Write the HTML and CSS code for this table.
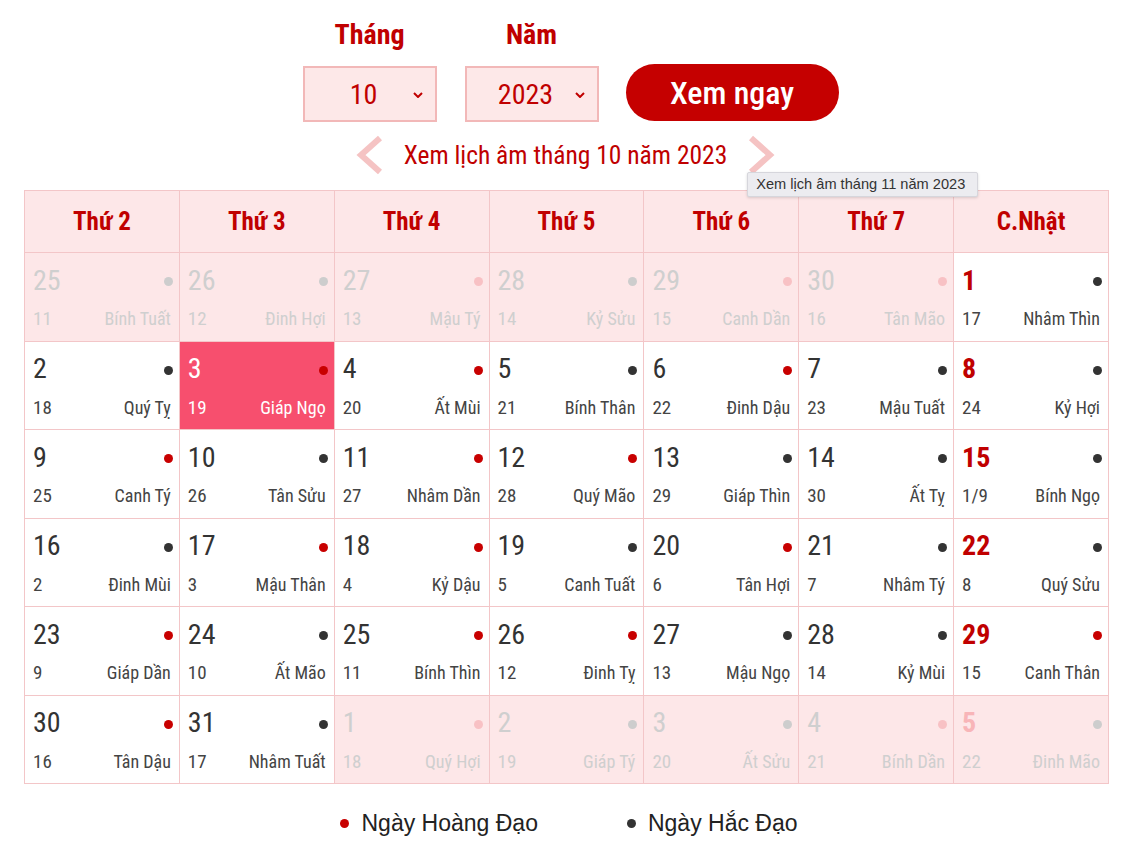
FILE: index.html
```html
<!DOCTYPE html>
<html lang="vi">
<head>
<meta charset="utf-8">
<title>Lịch âm tháng 10 năm 2023</title>
<link rel="stylesheet" href="styles.css">
</head>
<body>
<div class="page">
  <form class="picker">
    <div class="field">
      <div class="label">Tháng</div>
      <div class="select"><span>10</span><svg class="caret" viewBox="0 0 10 6" width="10" height="6"><path d="M1 1l4 4 4-4" fill="none" stroke="#c00000" stroke-width="2"/></svg></div>
    </div>
    <div class="field">
      <div class="label">Năm</div>
      <div class="select"><span>2023</span><svg class="caret" viewBox="0 0 10 6" width="10" height="6"><path d="M1 1l4 4 4-4" fill="none" stroke="#c00000" stroke-width="2"/></svg></div>
    </div>
    <button type="button" class="go">Xem ngay</button>
  </form>

  <div class="nav">
    <svg class="arrow" viewBox="0 0 30 40" width="30" height="40"><path d="M26 3L7 20l19 17" fill="none" stroke="#f5c3c3" stroke-width="6"/></svg>
    <div class="nav-title">Xem lịch âm tháng 10 năm 2023</div>
    <div class="next-wrap">
      <svg class="arrow" viewBox="0 0 30 40" width="30" height="40"><path d="M4 3l19 17L4 37" fill="none" stroke="#f5c3c3" stroke-width="6"/></svg>
      <div class="tooltip">Xem lịch âm tháng 11 năm 2023</div>
    </div>
  </div>

  <table class="cal">
    <thead>
      <tr><th>Thứ 2</th><th>Thứ 3</th><th>Thứ 4</th><th>Thứ 5</th><th>Thứ 6</th><th>Thứ 7</th><th>C.Nhật</th></tr>
    </thead>
    <tbody>
      <tr>
        <td class="out"><div class="top"><span class="d">25</span><i class="dot k"></i></div><div class="bot"><span>11</span><span>Bính Tuất</span></div></td>
        <td class="out"><div class="top"><span class="d">26</span><i class="dot k"></i></div><div class="bot"><span>12</span><span>Đinh Hợi</span></div></td>
        <td class="out"><div class="top"><span class="d">27</span><i class="dot r"></i></div><div class="bot"><span>13</span><span>Mậu Tý</span></div></td>
        <td class="out"><div class="top"><span class="d">28</span><i class="dot k"></i></div><div class="bot"><span>14</span><span>Kỷ Sửu</span></div></td>
        <td class="out"><div class="top"><span class="d">29</span><i class="dot r"></i></div><div class="bot"><span>15</span><span>Canh Dần</span></div></td>
        <td class="out"><div class="top"><span class="d">30</span><i class="dot r"></i></div><div class="bot"><span>16</span><span>Tân Mão</span></div></td>
        <td class="sun"><div class="top"><span class="d">1</span><i class="dot k"></i></div><div class="bot"><span>17</span><span>Nhâm Thìn</span></div></td>
      </tr>
      <tr>
        <td><div class="top"><span class="d">2</span><i class="dot k"></i></div><div class="bot"><span>18</span><span>Quý Tỵ</span></div></td>
        <td class="today"><div class="top"><span class="d">3</span><i class="dot r"></i></div><div class="bot"><span>19</span><span>Giáp Ngọ</span></div></td>
        <td><div class="top"><span class="d">4</span><i class="dot r"></i></div><div class="bot"><span>20</span><span>Ất Mùi</span></div></td>
        <td><div class="top"><span class="d">5</span><i class="dot k"></i></div><div class="bot"><span>21</span><span>Bính Thân</span></div></td>
        <td><div class="top"><span class="d">6</span><i class="dot r"></i></div><div class="bot"><span>22</span><span>Đinh Dậu</span></div></td>
        <td><div class="top"><span class="d">7</span><i class="dot k"></i></div><div class="bot"><span>23</span><span>Mậu Tuất</span></div></td>
        <td class="sun"><div class="top"><span class="d">8</span><i class="dot k"></i></div><div class="bot"><span>24</span><span>Kỷ Hợi</span></div></td>
      </tr>
      <tr>
        <td><div class="top"><span class="d">9</span><i class="dot r"></i></div><div class="bot"><span>25</span><span>Canh Tý</span></div></td>
        <td><div class="top"><span class="d">10</span><i class="dot k"></i></div><div class="bot"><span>26</span><span>Tân Sửu</span></div></td>
        <td><div class="top"><span class="d">11</span><i class="dot r"></i></div><div class="bot"><span>27</span><span>Nhâm Dần</span></div></td>
        <td><div class="top"><span class="d">12</span><i class="dot r"></i></div><div class="bot"><span>28</span><span>Quý Mão</span></div></td>
        <td><div class="top"><span class="d">13</span><i class="dot k"></i></div><div class="bot"><span>29</span><span>Giáp Thìn</span></div></td>
        <td><div class="top"><span class="d">14</span><i class="dot k"></i></div><div class="bot"><span>30</span><span>Ất Tỵ</span></div></td>
        <td class="sun"><div class="top"><span class="d">15</span><i class="dot k"></i></div><div class="bot"><span>1/9</span><span>Bính Ngọ</span></div></td>
      </tr>
      <tr>
        <td><div class="top"><span class="d">16</span><i class="dot k"></i></div><div class="bot"><span>2</span><span>Đinh Mùi</span></div></td>
        <td><div class="top"><span class="d">17</span><i class="dot r"></i></div><div class="bot"><span>3</span><span>Mậu Thân</span></div></td>
        <td><div class="top"><span class="d">18</span><i class="dot r"></i></div><div class="bot"><span>4</span><span>Kỷ Dậu</span></div></td>
        <td><div class="top"><span class="d">19</span><i class="dot k"></i></div><div class="bot"><span>5</span><span>Canh Tuất</span></div></td>
        <td><div class="top"><span class="d">20</span><i class="dot r"></i></div><div class="bot"><span>6</span><span>Tân Hợi</span></div></td>
        <td><div class="top"><span class="d">21</span><i class="dot k"></i></div><div class="bot"><span>7</span><span>Nhâm Tý</span></div></td>
        <td class="sun"><div class="top"><span class="d">22</span><i class="dot k"></i></div><div class="bot"><span>8</span><span>Quý Sửu</span></div></td>
      </tr>
      <tr>
        <td><div class="top"><span class="d">23</span><i class="dot r"></i></div><div class="bot"><span>9</span><span>Giáp Dần</span></div></td>
        <td><div class="top"><span class="d">24</span><i class="dot k"></i></div><div class="bot"><span>10</span><span>Ất Mão</span></div></td>
        <td><div class="top"><span class="d">25</span><i class="dot r"></i></div><div class="bot"><span>11</span><span>Bính Thìn</span></div></td>
        <td><div class="top"><span class="d">26</span><i class="dot r"></i></div><div class="bot"><span>12</span><span>Đinh Tỵ</span></div></td>
        <td><div class="top"><span class="d">27</span><i class="dot k"></i></div><div class="bot"><span>13</span><span>Mậu Ngọ</span></div></td>
        <td><div class="top"><span class="d">28</span><i class="dot k"></i></div><div class="bot"><span>14</span><span>Kỷ Mùi</span></div></td>
        <td class="sun"><div class="top"><span class="d">29</span><i class="dot r"></i></div><div class="bot"><span>15</span><span>Canh Thân</span></div></td>
      </tr>
      <tr>
        <td><div class="top"><span class="d">30</span><i class="dot r"></i></div><div class="bot"><span>16</span><span>Tân Dậu</span></div></td>
        <td><div class="top"><span class="d">31</span><i class="dot k"></i></div><div class="bot"><span>17</span><span>Nhâm Tuất</span></div></td>
        <td class="out"><div class="top"><span class="d">1</span><i class="dot r"></i></div><div class="bot"><span>18</span><span>Quý Hợi</span></div></td>
        <td class="out"><div class="top"><span class="d">2</span><i class="dot k"></i></div><div class="bot"><span>19</span><span>Giáp Tý</span></div></td>
        <td class="out"><div class="top"><span class="d">3</span><i class="dot k"></i></div><div class="bot"><span>20</span><span>Ất Sửu</span></div></td>
        <td class="out"><div class="top"><span class="d">4</span><i class="dot r"></i></div><div class="bot"><span>21</span><span>Bính Dần</span></div></td>
        <td class="out sun"><div class="top"><span class="d">5</span><i class="dot k"></i></div><div class="bot"><span>22</span><span>Đinh Mão</span></div></td>
      </tr>
    </tbody>
  </table>

  <div class="legend">
    <div class="item"><i class="ldot r"></i>Ngày Hoàng Đạo</div>
    <div class="item"><i class="ldot k"></i>Ngày Hắc Đạo</div>
  </div>
</div>
</body>
</html>
```

FILE: styles.css
```css
* { box-sizing: border-box; }
html, body { margin: 0; padding: 0; background: #fff; }
body {
  font-family: "Roboto Condensed", "Liberation Sans Narrow", "DejaVu Sans Condensed", Roboto, sans-serif;
  font-stretch: condensed;
  color: #333;
}
.page {
  width: 1085px;
  margin-left: 24px;
  padding-top: 18px;
}
.picker {
  display: flex;
  justify-content: center;
  align-items: flex-end;
  margin: 0;
  padding-left: 8px;
}
.field {
  display: flex;
  flex-direction: column;
  align-items: center;
  margin-right: 28px;
}
.label {
  color: #c00000;
  font-weight: 700;
  font-size: 28px;
  line-height: 34px;
  margin-bottom: 14px;
}
.select {
  width: 134px;
  height: 56px;
  border: 2px solid #f2b8b8;
  background: #fde8e8;
  display: flex;
  align-items: center;
  justify-content: center;
  position: relative;
  color: #c00000;
  font-size: 28px;
}
.select span { margin-right: 12px; }
.caret {
  position: absolute;
  right: 12px;
  top: 24px;
}
.go {
  width: 213px;
  height: 57px;
  border: none;
  border-radius: 29px;
  background: #c50000;
  color: #fff;
  font-family: inherit;
  font-stretch: condensed;
  font-size: 32px;
  font-weight: 500;
  margin-bottom: 1px;
  margin-left: -1px;
}
.nav {
  display: flex;
  justify-content: center;
  align-items: center;
  height: 68px;
  padding-bottom: 2px;
  padding-right: 2px;
}
.arrow { display: block; }
.nav-title {
  color: #c00000;
  font-size: 25.5px;
  margin: 0 20px;
}
.next-wrap { position: relative; }
.tooltip {
  position: absolute;
  left: 0;
  top: 37px;
  width: 231px;
  height: 25px;
  background: #ececf0;
  border: 1px solid #d6d6dc;
  border-radius: 2px;
  box-shadow: 0 1px 3px rgba(0,0,0,0.15);
  font-family: "Liberation Sans", Arial, sans-serif;
  font-stretch: normal;
  font-size: 14.6px;
  color: #333;
  line-height: 23px;
  padding-left: 8px;
  white-space: nowrap;
  z-index: 5;
}
.cal {
  width: 1085px;
  border-collapse: collapse;
  table-layout: fixed;
}
.cal th, .cal td {
  border: 1px solid #f3c6c8;
  padding: 0;
}
.cal th {
  height: 62px;
  background: #fde7e8;
  color: #c00000;
  font-size: 25px;
  font-weight: 700;
}
.cal td {
  height: 88.5px;
  vertical-align: top;
  padding: 8px 8px 0 8px;
}
.top {
  display: flex;
  justify-content: space-between;
  align-items: center;
  height: 38px;
}
.d {
  font-size: 28px;
  color: #333;
}
.bot {
  display: flex;
  justify-content: space-between;
  align-items: center;
  margin-top: 9px;
  font-size: 19px;
  line-height: 22px;
  color: #444;
}
.bot span:last-child { font-size: 18px; }
.dot {
  width: 9px;
  height: 9px;
  border-radius: 50%;
  display: block;
  margin-right: -2px;
  margin-top: 3px;
}
.dot.r { background: #c80000; }
.dot.k { background: #333; }
.sun .d { color: #c00000; font-weight: 700; }
.today { background: #f74f6e; }
.today .d, .today .bot { color: #fff; }
.out { background: #fde7e8; }
.out .d, .out .bot { color: #cfcfcf; }
.out .dot.k { background: #cdcdcd; }
.out .dot.r { background: #f8c1c4; }
.out.sun .d { color: #f8b5b8; font-weight: 700; }
.legend {
  display: flex;
  justify-content: center;
  gap: 89px;
  margin-top: 26px;
  font-family: "Liberation Sans", Arial, sans-serif;
  font-stretch: normal;
  font-size: 23px;
  color: #222;
  padding-left: 5px;
}
.item { display: flex; align-items: center; }
.ldot {
  width: 9px;
  height: 9px;
  border-radius: 50%;
  display: block;
  margin-right: 12px;
}
.ldot.r { background: #c80000; }
.ldot.k { background: #333; }
```
